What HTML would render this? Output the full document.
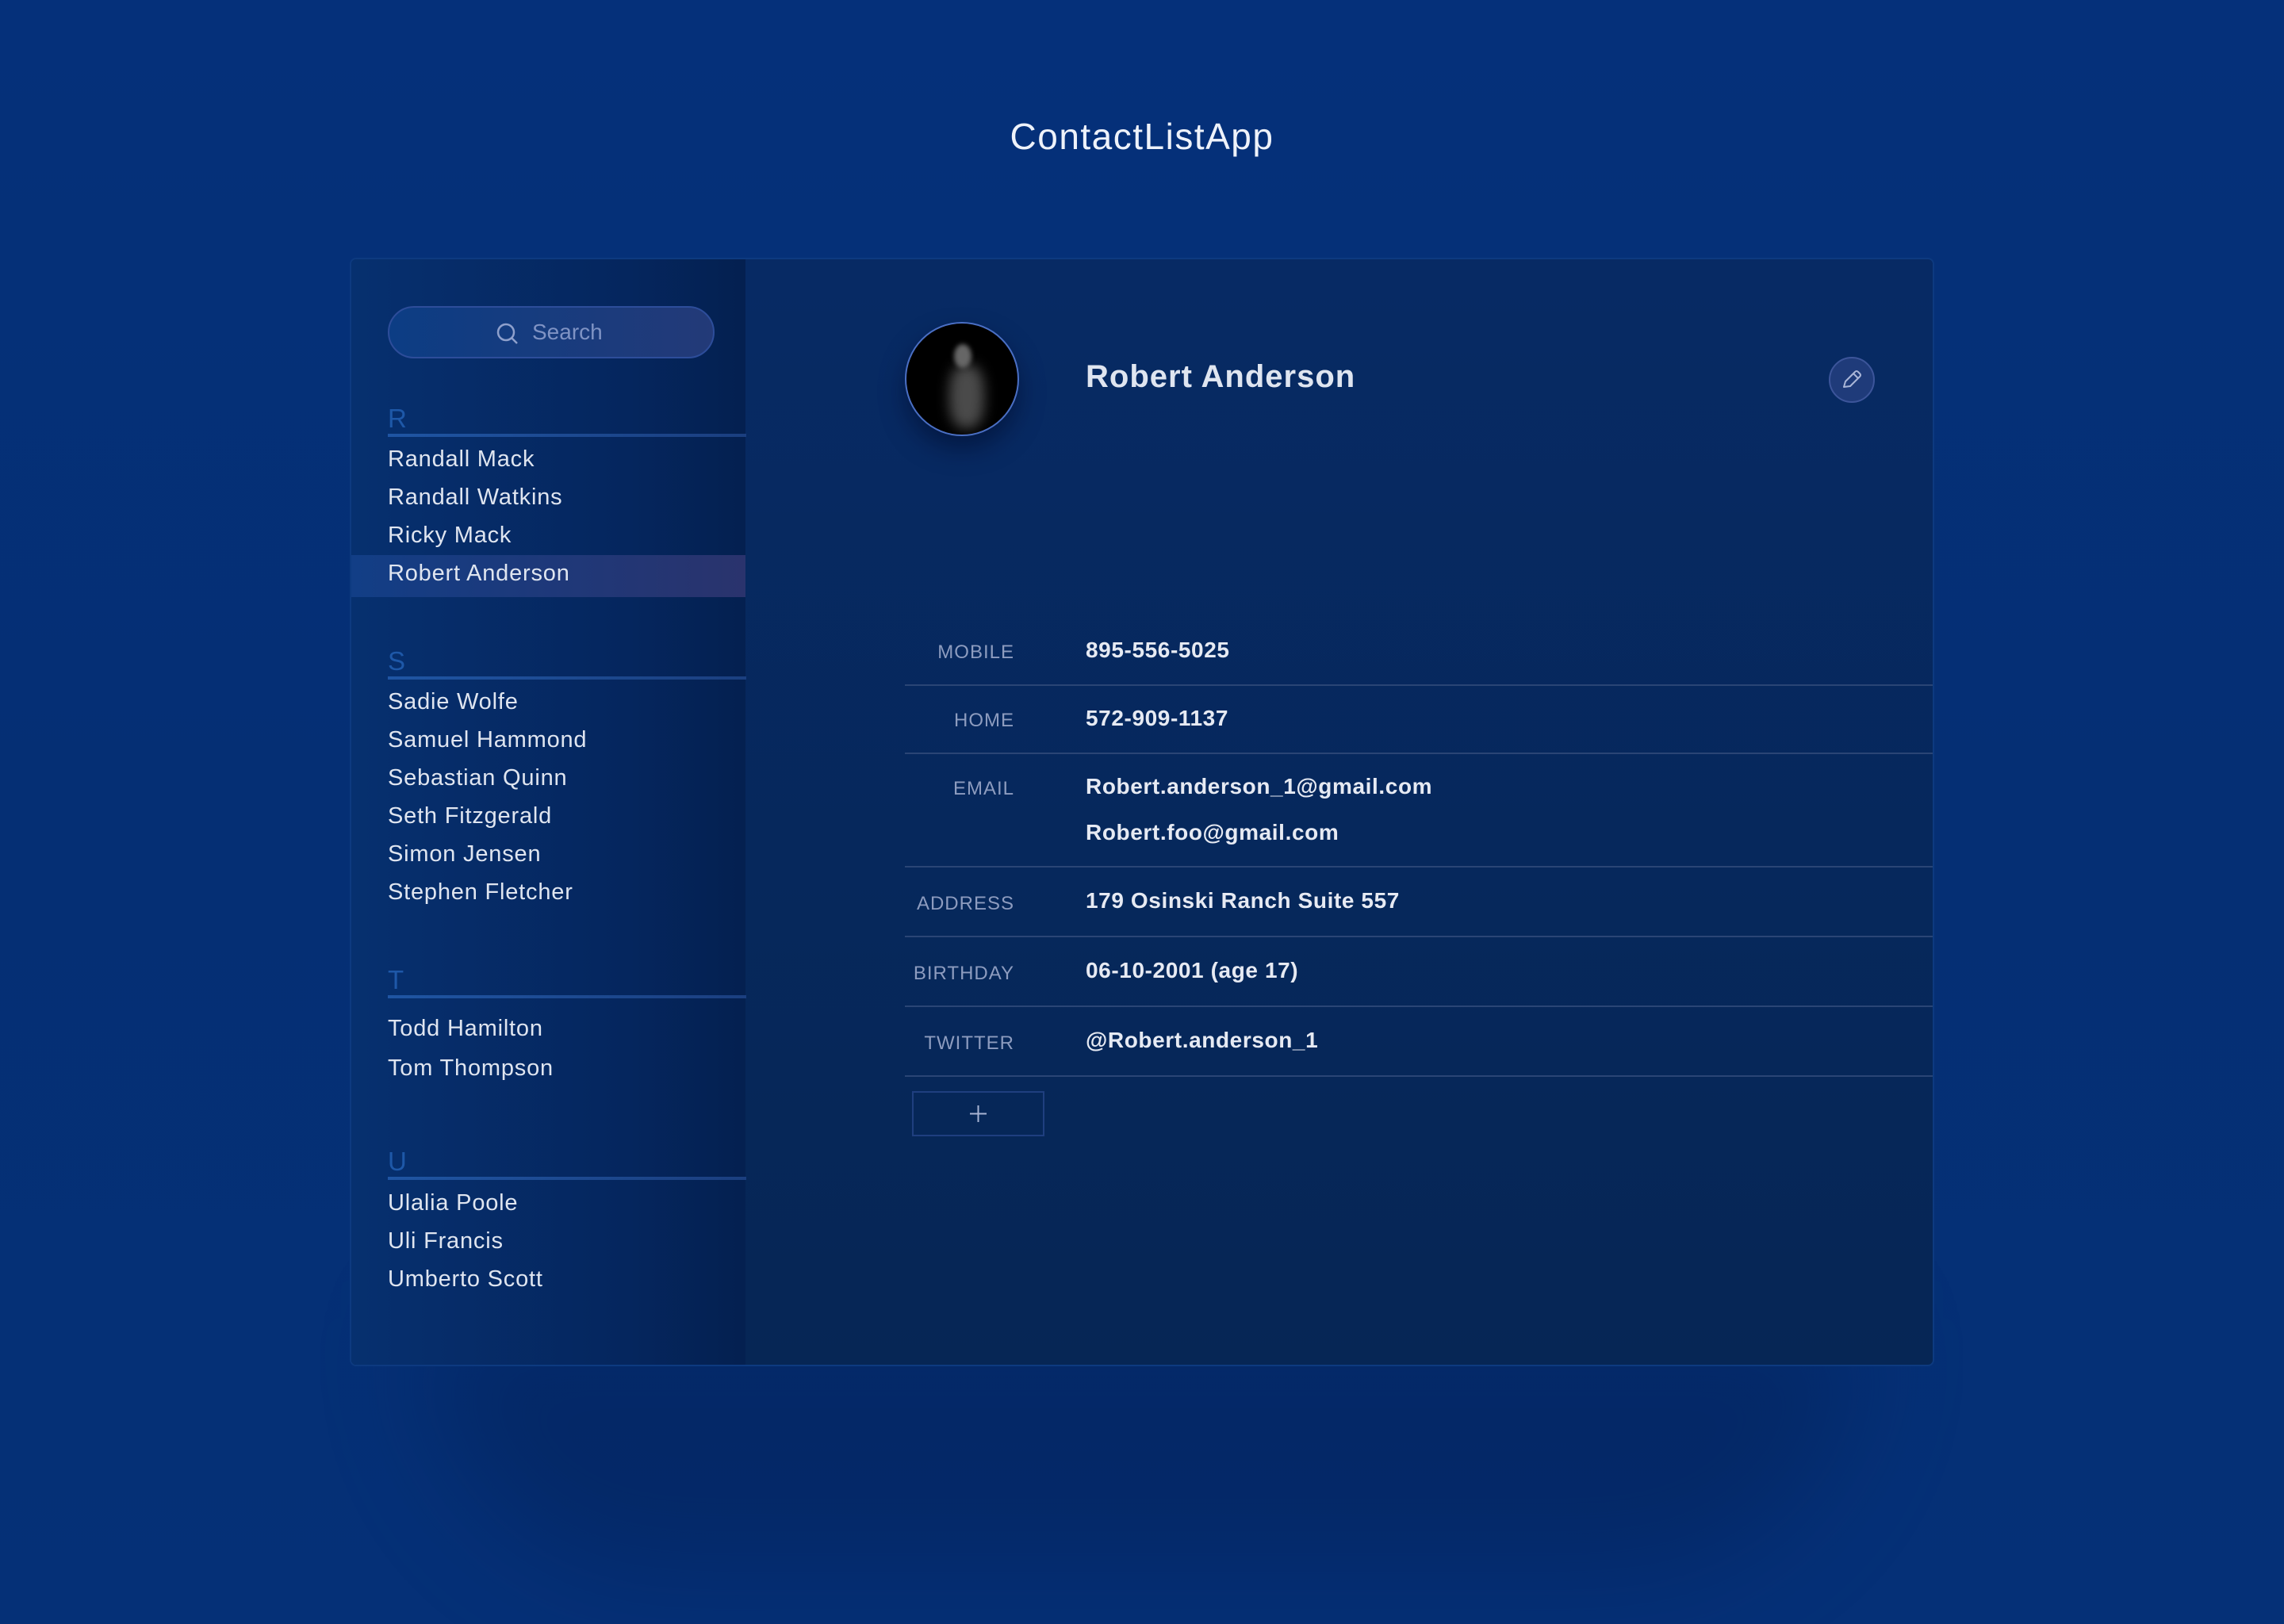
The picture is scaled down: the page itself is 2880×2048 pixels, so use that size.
<!DOCTYPE html>
<html><head><meta charset="utf-8">
<style>
*{margin:0;padding:0;box-sizing:border-box}
html,body{width:2880px;height:2048px;overflow:hidden}
body{background:linear-gradient(180deg,#05307a 0%,#052f74 50%,#053077 100%);font-family:"Liberation Sans",sans-serif;position:relative}
.title{position:absolute;left:0;width:2880px;top:145px;text-align:center;color:#eef2fa;font-size:46px;letter-spacing:1.5px}
.shadow{position:absolute;left:540px;top:1660px;width:1800px;height:330px;background:#041f55;border-radius:0 0 300px 300px;filter:blur(70px);opacity:.45}
.card{position:absolute;left:441px;top:325px;width:1998px;height:1398px;background:linear-gradient(180deg,#072a64,#062655);border:2px solid #0d3a80;border-radius:8px;overflow:hidden}
.side{position:absolute;left:0;top:0;width:497px;height:100%;background:linear-gradient(90deg,#06306f 0%,#05265e 70%,#042050 100%)}
.search{position:absolute;left:46px;top:59px;width:412px;height:66px;border-radius:33px;border:2px solid #2d4d9a;background:linear-gradient(90deg,#0c3d84,#233a78);color:#7f93c4;font-size:28px;line-height:62px;padding-left:180px}
.search svg{position:absolute;left:134px;top:18px}
.hdr{position:absolute;left:46px;color:#1e58a8;font-size:33px}
.ul{position:absolute;left:46px;width:452px;height:4px;background:linear-gradient(90deg,#1f55a3,#1b3f80)}
.nm{position:absolute;left:46px;color:#dfe5f0;font-size:29px;letter-spacing:.8px;line-height:34px}
.sel{position:absolute;left:0;top:373px;width:497px;height:53px;background:linear-gradient(90deg,#123e86,#2a336d)}
.lbl{position:absolute;right:1158px;color:#8d9cbf;font-size:24px;letter-spacing:1px;text-align:right}
.val{position:absolute;left:926px;color:#e6eaf3;font-size:28px;font-weight:bold;letter-spacing:.6px}
.line{position:absolute;left:698px;width:1300px;height:2px;background:#2a4575}
</style></head><body>
<div class="title">ContactListApp</div>
<div class="shadow"></div>
<div class="card">
 <div class="side">
  <div class="search"><svg width="30" height="30" viewBox="0 0 30 30"><circle cx="13" cy="13" r="10" fill="none" stroke="#8ea0cc" stroke-width="2.5"/><line x1="20" y1="20" x2="27" y2="27" stroke="#8ea0cc" stroke-width="2.5"/></svg>Search</div>
  <div class="hdr" style="top:182px">R</div><div class="ul" style="top:220px"></div>
  <div class="sel"></div>
  <div class="nm" style="top:235px">Randall Mack</div>
  <div class="nm" style="top:283px">Randall Watkins</div>
  <div class="nm" style="top:331px">Ricky Mack</div>
  <div class="nm" style="top:379px">Robert Anderson</div>
  <div class="hdr" style="top:488px">S</div><div class="ul" style="top:526px"></div>
  <div class="nm" style="top:541px">Sadie Wolfe</div>
  <div class="nm" style="top:589px">Samuel Hammond</div>
  <div class="nm" style="top:637px">Sebastian Quinn</div>
  <div class="nm" style="top:685px">Seth Fitzgerald</div>
  <div class="nm" style="top:733px">Simon Jensen</div>
  <div class="nm" style="top:781px">Stephen Fletcher</div>
  <div class="hdr" style="top:890px">T</div><div class="ul" style="top:928px"></div>
  <div class="nm" style="top:953px">Todd Hamilton</div>
  <div class="nm" style="top:1003px">Tom Thompson</div>
  <div class="hdr" style="top:1119px">U</div><div class="ul" style="top:1157px"></div>
  <div class="nm" style="top:1173px">Ulalia Poole</div>
  <div class="nm" style="top:1221px">Uli Francis</div>
  <div class="nm" style="top:1269px">Umberto Scott</div>
 </div>
 <div style="position:absolute;left:698px;top:79px;width:144px;height:144px;border-radius:50%;border:2px solid #4a6fc4;background:#000;box-shadow:0 16px 30px rgba(0,10,40,.5);overflow:hidden">
  <div style="position:absolute;left:54px;top:52px;width:44px;height:80px;border-radius:40%;background:#4a4a4a;filter:blur(8px)"></div>
  <div style="position:absolute;left:60px;top:26px;width:22px;height:30px;border-radius:50%;background:#666;filter:blur(3px)"></div>
 </div>
 <div style="position:absolute;left:926px;top:126px;color:#dfe5f0;font-size:40px;font-weight:bold;letter-spacing:1px">Robert Anderson</div>
 <div style="position:absolute;left:1863px;top:123px;width:58px;height:58px;border-radius:50%;background:#1f3b7a;border:2px solid #3c559a">
  <svg width="58" height="58" viewBox="0 0 58 58" style="position:absolute;left:-2px;top:-2px"><path d="M19 38 L21 31 L33 19 Q35 17 37 19 L39 21 Q41 23 39 25 L27 37 Z M31 21 L37 27" fill="none" stroke="#aab6d8" stroke-width="2" stroke-linejoin="round"/></svg>
 </div>
 <div class="lbl" style="top:482px">MOBILE</div><div class="val" style="top:477px">895-556-5025</div>
 <div class="line" style="top:536px"></div>
 <div class="lbl" style="top:568px">HOME</div><div class="val" style="top:563px">572-909-1137</div>
 <div class="line" style="top:622px"></div>
 <div class="lbl" style="top:654px">EMAIL</div><div class="val" style="top:649px">Robert.anderson_1@gmail.com</div>
 <div class="val" style="top:707px">Robert.foo@gmail.com</div>
 <div class="line" style="top:765px"></div>
 <div class="lbl" style="top:799px">ADDRESS</div><div class="val" style="top:793px">179 Osinski Ranch Suite 557</div>
 <div class="line" style="top:853px"></div>
 <div class="lbl" style="top:887px">BIRTHDAY</div><div class="val" style="top:881px">06-10-2001 (age 17)</div>
 <div class="line" style="top:941px"></div>
 <div class="lbl" style="top:975px">TWITTER</div><div class="val" style="top:969px">@Robert.anderson_1</div>
 <div class="line" style="top:1029px"></div>
 <div style="position:absolute;left:707px;top:1049px;width:167px;height:57px;border:2px solid #1f3f7f">
  <svg width="163" height="53" viewBox="0 0 163 53"><path d="M81.5 16 V37 M71 26.5 H92" stroke="#a8b4d4" stroke-width="2"/></svg>
 </div>
</div>
</body></html>
